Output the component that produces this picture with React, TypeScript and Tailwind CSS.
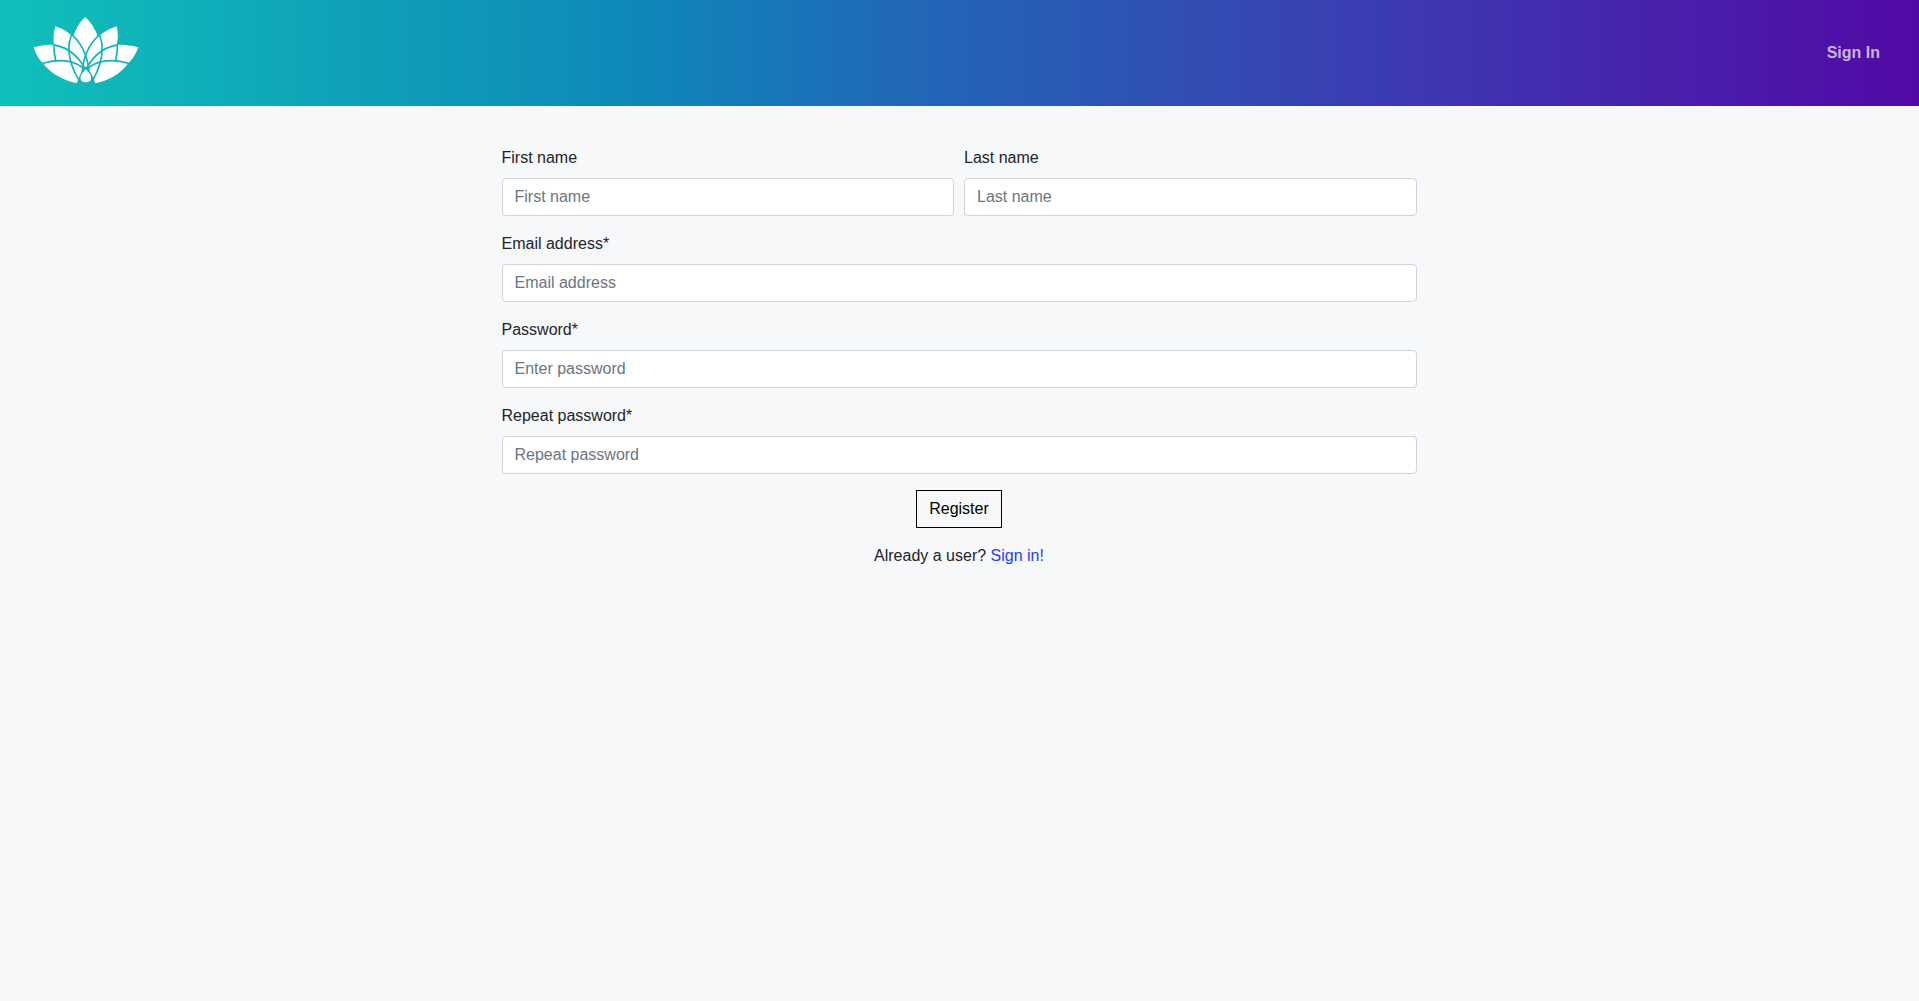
const T = "#12b3bb";

function Logo() {
  return (
    <svg width="107" height="67" viewBox="100 50 320 200" fill="none" aria-label="logo" className="mb-1.5">
      <path
        fill="#fff"
        d="M256 50C271 64 285 83 292 103L293 107L306 97C322 88 336 80 350 75C355 95 355 115 350 133C370 133 395 134 415 140C408 160 398 175 385 188C360 222 325 240 285 248L233 248C195 240 155 222 130 188C117 175 108 160 102 140C122 134 145 133 163 133C160 115 161 95 168 75C183 80 197 87 209 97L222 107L222 103C229 83 241 64 256 50Z"
      />
      <g stroke={T} strokeWidth="5" strokeLinecap="round">
        <path d="M240 244C192 165 205 110 228 85" />
        <path d="M276 244C322 165 309 110 286 85" />
        <path d="M170 76C215 90 262 135 268 215" />
        <path d="M348 76C300 90 252 135 247 215" />
        <path d="M163 133C205 140 245 170 270 235" />
        <path d="M352 133C310 140 270 170 245 235" />
        <path d="M163 133C162 150 164 165 168 181" />
        <path d="M352 133C353 150 351 165 347 181" />
        <path d="M130 188C170 175 225 175 262 212" />
        <path d="M385 188C345 175 290 175 253 212" />
      </g>
      <path fill={T} d="M230 252C238 225 245 212 258 198C271 212 278 225 288 252Z" />
      <path fill="#fff" d="M258 206C268 217 274 225 274 232C274 241 266 245 258 245C250 245 242 241 242 232C242 225 248 217 258 206Z" />
    </svg>
  );
}

function Field({ label, placeholder }: { label: string; placeholder: string }) {
  return (
    <div className="mb-4 flex flex-col">
      <label className="mb-2 text-base leading-6 text-[#212529]">{label}</label>
      <input
        type="text"
        placeholder={placeholder}
        className="h-[38px] w-full rounded border border-[#ced4da] bg-white px-3 py-1.5 text-base leading-6 text-[#212529] outline-none placeholder:text-[#6c757d] placeholder:opacity-100"
      />
    </div>
  );
}

export default function App() {
  return (
    <div className="min-h-[1001px] bg-[#f7f8fa] font-['Liberation_Sans',Arial,sans-serif]">
      <header className="flex h-[106px] items-center justify-between bg-[linear-gradient(90deg,#10c0ba_0%,#0e88b8_33%,#1e6cb8_45%,#3a3fb2_70%,#5209a5_100%)] pl-[33px] pr-[39px]">
        <Logo />
        <a className="text-base font-bold text-white/70">Sign In</a>
      </header>
      <main className="ml-[501.5px] w-[915px] pt-10">
        <div className="grid grid-cols-2 gap-x-2.5">
          <Field label="First name" placeholder="First name" />
          <Field label="Last name" placeholder="Last name" />
        </div>
        <Field label="Email address*" placeholder="Email address" />
        <Field label="Password*" placeholder="Enter password" />
        <Field label="Repeat password*" placeholder="Repeat password" />
        <div className="flex flex-col items-center">
          <button className="h-[38px] border border-black bg-transparent px-3 text-base leading-6 text-black">Register</button>
          <p className="mt-4 text-base leading-6 text-[#212529]">
            Already a user? <a className="text-[#1f3bff]">Sign in!</a>
          </p>
        </div>
      </main>
    </div>
  );
}
